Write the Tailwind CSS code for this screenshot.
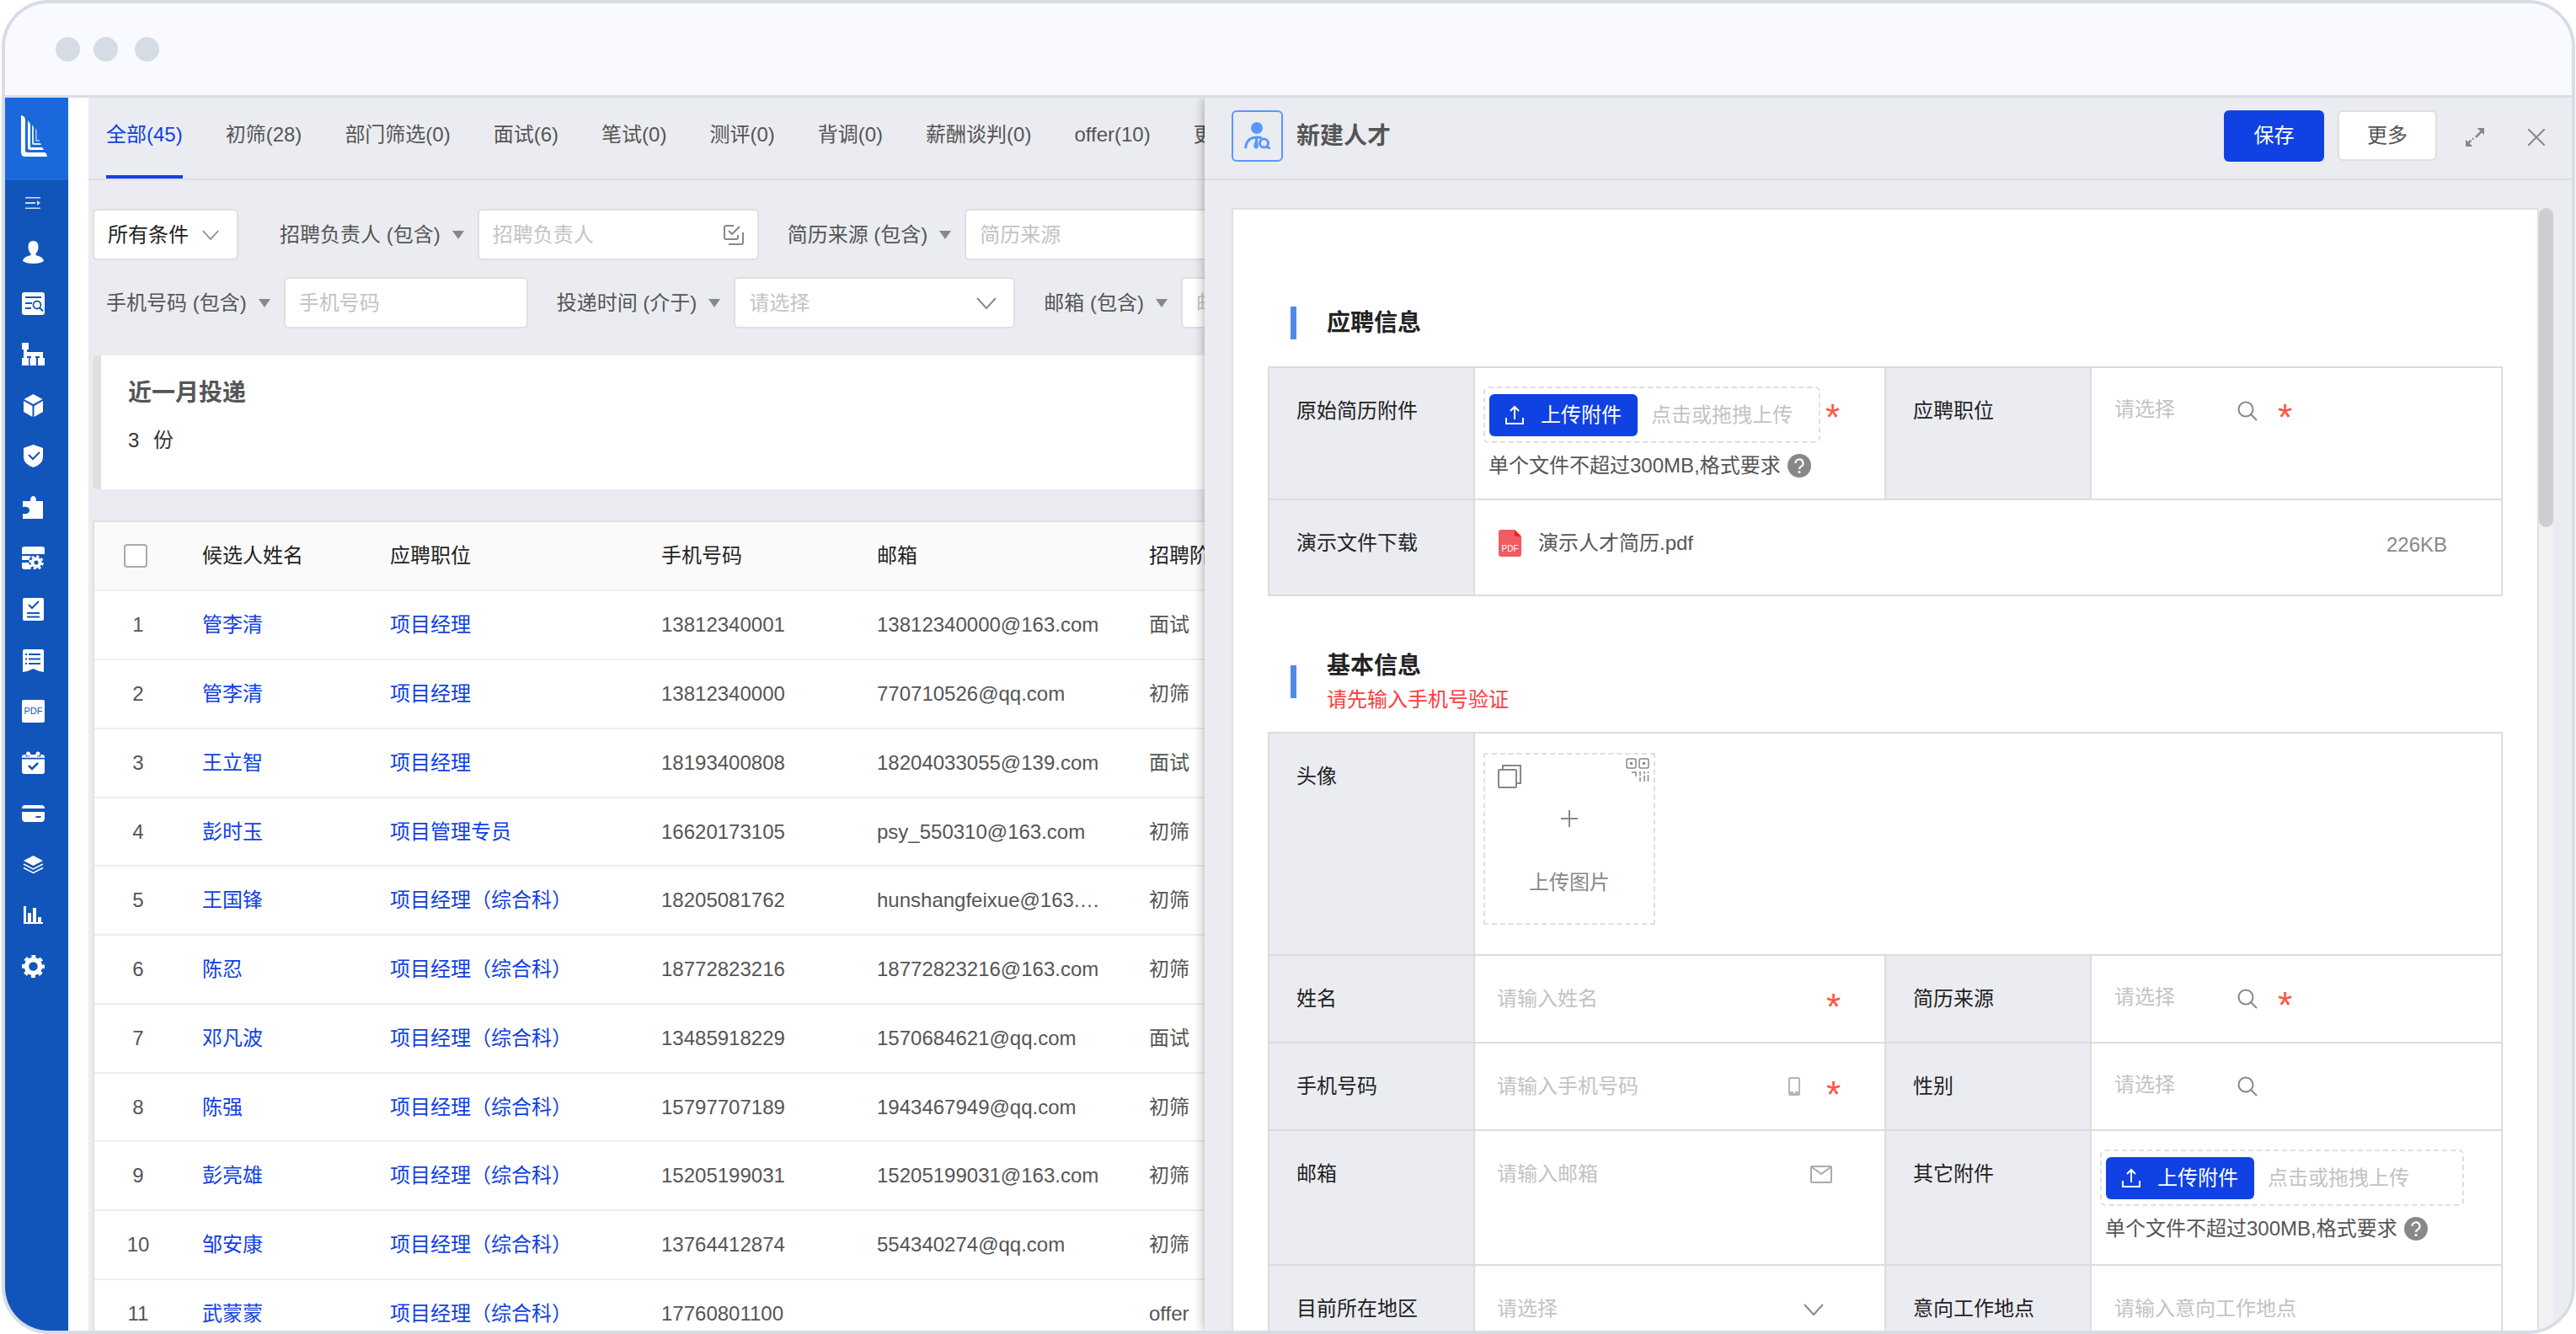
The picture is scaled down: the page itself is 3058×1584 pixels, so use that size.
<!DOCTYPE html>
<html lang="zh-CN">

<head>
    <meta charset="UTF-8">
    <meta name="viewport" content="width=device-width, initial-scale=1.0">
    <script src="https://cdn.jsdelivr.net/npm/@tailwindcss/browser@4"></script>
    <title>新建人才</title>
</head>

<body class="h-screen overflow-hidden bg-white pl-[2px] pr-px font-['Liberation_Sans','Noto_Sans_CJK_SC',sans-serif] text-[24px] leading-6 text-[#555]">
    <!-- Shared icons -->
    <svg class="hidden">
        <symbol id="caret" viewBox="0 0 14 10"><path d="M0 0h14l-7 10z" fill="#888" /></symbol>
        <symbol id="chevron" viewBox="0 0 24 14"><path d="M1 1l11 12L23 1" fill="none" stroke="#888" stroke-width="2" /></symbol>
        <symbol id="search" viewBox="0 0 24 24"><g fill="none" stroke="#888" stroke-width="2"><circle cx="10" cy="10" r="8.500" /><path d="M16 16l7 7" /></g></symbol>
        <symbol id="upload" viewBox="0 0 22 24"><path d="M11 17V2M6 7l5-5 5 5M1 15v7h20v-7" fill="none" stroke="#fff" stroke-width="2" /></symbol>
        <symbol id="help" viewBox="0 0 28 28"><circle cx="14" cy="14" r="14" fill="#888" /><path d="M9.500 11a4.500 4.500 0 1 1 6.500 4q-2 1-2 3" fill="none" stroke="#fff" stroke-width="2.200" /><circle cx="14" cy="21.500" r="1.500" fill="#fff" /></symbol>
    </svg>

    <div class="flex h-full flex-col overflow-hidden rounded-[56px] border-4 border-[#d7dce5] bg-white">
        <!-- Window bar -->
        <div class="flex h-[112px] shrink-0 items-center border-b-[3px] border-[#d7dce5] bg-[#f8faff] pl-[60px]">
            <span class="mr-4 size-[29px] rounded-full bg-[#d5dce6]"></span>
            <span class="mr-5 size-[29px] rounded-full bg-[#d5dce6]"></span>
            <span class="size-[29px] rounded-full bg-[#d5dce6]"></span>
        </div>

        <div class="grid min-h-0 flex-1 grid-cols-[75px_24px_1325fr_1623fr] grid-rows-[minmax(0,1fr)] overflow-hidden">
            <!-- Sidebar -->
            <aside class="bg-[#1155bb]">
                <a href="#" aria-label="首页" class="flex h-[98px] items-center bg-[#1b68dd] pb-2 pl-[19px]">
                    <svg class="h-[49px] w-[31px]" viewBox="0 0 31 49" fill="#fff">
                        <path d="M0 0q3 0 5 4v38q0 2 2 2h21q2 0 3 5H5q-5 0-5-5z" />
                        <path d="M8 6l3 4v27q0 1 1 1h13l2 3H11q-3 0-3-3z" />
                        <path d="M13 11l2 3v18q0 1 1 1h7l1 2h-9q-2 0-2-2z" opacity=".85" />
                        <path d="M17 15l2 3v11h3v2h-5z" opacity=".5" />
                    </svg>
                </a>
                <button aria-label="收起菜单" class="mt-5 flex h-[14px] w-full justify-center pr-[9px]">
                    <svg class="h-[14px] w-[18px]" viewBox="0 0 18 14" fill="#fff"><path d="M0 0h18v1.500H0zM0 6h12v2H0zM0 12.500h18V14H0zM14 4l4 3-4 3z" opacity=".8" /></svg>
                </button>
                <nav class="mt-[38px] flex h-[875px] flex-col items-center justify-between pr-[9px] [&_svg]:size-[27px] [&_svg]:fill-white">
                    <a href="#" aria-label="人员"><svg viewBox="0 0 27 27"><path d="M13.500 0q6 0 6 7 0 5-3 8v2q9 2 9.500 7-4 3-12.500 3T1 24q.5-5 9.500-7v-2q-3-3-3-8 0-7 6-7z" /></svg></a>
                    <a href="#" aria-label="简历搜索"><svg viewBox="0 0 27 27"><rect width="27" height="27" rx="3" /><g fill="none" stroke="#1155bb" stroke-width="1.800"><path d="M4 6h19M4 13h8M4 19h7" /><circle cx="18" cy="15" r="4.500" /><path d="M21 18.500l4 4" /></g></svg></a>
                    <a href="#" aria-label="组织"><svg viewBox="0 0 27 27"><path d="M0 0h8v8H6v3h19v7h2v9h-8v-9h2v-2h-5v2h1v9H9.500v-9H11v-2H6v2h2v9H0v-9h2V8H0z" /></svg></a>
                    <a href="#" aria-label="产品"><svg viewBox="0 0 27 27"><path d="M13.500 0l11 6-11 6-11-6zM2 8l10.500 6v13L2 21zM25 8l-10.500 6v13L25 21z" /></svg></a>
                    <a href="#" aria-label="安全"><svg viewBox="0 0 27 27"><path d="M13.500 0L25 4v11q0 8-11.500 12Q2 23 2 15V4z" /><path d="M8 12l5 5 8-8" fill="none" stroke="#1155bb" stroke-width="2" /></svg></a>
                    <a href="#" aria-label="插件"><svg viewBox="0 0 27 27"><path d="M1 6h9q0-6 3.500-6T17 6h8v21H1v-6q8 1 8-4t-8-4z" /></svg></a>
                    <a href="#" aria-label="表单设置"><svg viewBox="0 0 27 27"><path d="M3 0h21q3 0 3 3v6H0V3q0-3 3-3zM0 11h11l-3 5H0zM0 19h8l3 8H3q-3 0-3-3z" /><circle cx="17" cy="19" r="4.500" fill="none" stroke="#fff" stroke-width="4" /><circle cx="17" cy="19" r="7.500" fill="none" stroke="#fff" stroke-width="2.500" stroke-dasharray="3.200 2.690" /></svg></a>
                    <a href="#" aria-label="任务"><svg viewBox="0 0 27 27"><rect x="1" width="25" height="27" rx="2" /><path d="M8 8l4 4 8-8M6 18h15M6 22.500h15" fill="none" stroke="#1155bb" stroke-width="2" /></svg></a>
                    <a href="#" aria-label="列表"><svg viewBox="0 0 27 27"><path d="M3 0h21q2 0 2 2v25q-7-1-12.500-4Q8 26 1 27V2q0-2 2-2z" /><path d="M8 6h14M8 11.500h14M8 17h14M4 6h2M4 11.500h2M4 17h2" stroke="#1155bb" stroke-width="2" /></svg></a>
                    <a href="#" aria-label="PDF"><svg viewBox="0 0 27 27"><rect width="27" height="27" rx="2" /><text x="13.500" y="17" text-anchor="middle" font-size="11" fill="#1155bb">PDF</text></svg></a>
                    <a href="#" aria-label="日程"><svg viewBox="0 0 27 27"><path d="M0 7q0-3 3-3h2l-1 3zM9 3l2 1h5l2-1v4H9zM24 4q3 0 3 3h-4l-1-3zM0 9.500h27V24q0 3-3 3H3q-3 0-3-3z" /><circle cx="7.500" cy="3" r="2.500" /><circle cx="19" cy="3" r="2.500" /><path d="M0 7h27" stroke="#fff" stroke-width="1.500" /><path d="M8 17l4 4 7-7" fill="none" stroke="#1155bb" stroke-width="2.500" /></svg></a>
                    <a href="#" aria-label="卡片"><svg viewBox="0 0 27 27"><path d="M4 4h19q4 0 4 4H0q0-4 4-4zM0 12h27v7q0 5-4 5H4q-4 0-4-5z" /><path d="M16 19q0-2 2-2h5q0 2-2 2z" fill="#1155bb" /></svg></a>
                    <a href="#" aria-label="图层"><svg viewBox="0 0 27 27"><path d="M13.500 3L25 9l-11.500 6L2 9z" /><path d="M2 13l11.500 6L25 13M2 17.500l11.500 6L25 17.500" fill="none" stroke="#fff" stroke-width="1.500" /></svg></a>
                    <a href="#" aria-label="统计"><svg viewBox="0 0 27 27"><path d="M2 3h3v19h2v-11h4v11h2V5h4v17h2v-6h4v6h2v2H2z" /></svg></a>
                    <a href="#" aria-label="设置"><svg viewBox="0 0 27 27"><circle cx="13.500" cy="13.500" r="8" fill="none" stroke="#fff" stroke-width="5.500" /><circle cx="13.500" cy="13.500" r="12" fill="none" stroke="#fff" stroke-width="3" stroke-dasharray="5 4.425" stroke-dashoffset="2.500" /></svg></a>
                </nav>
            </aside>
            <div></div>

            <!-- Candidate list -->
            <main class="overflow-hidden bg-[#ebecf1] pl-[5px]">
                <nav class="-ml-[5px] flex h-[98px] gap-[51px] border-b-2 border-[#dfdfdf] pl-[21px] whitespace-nowrap [&_a]:h-[96px] [&_a]:pt-8">
                    <a href="#" class="border-b-4 border-[#1041e3] text-[#1041e3]">全部(45)</a>
                    <a href="#">初筛(28)</a>
                    <a href="#">部门筛选(0)</a>
                    <a href="#">面试(6)</a>
                    <a href="#">笔试(0)</a>
                    <a href="#">测评(0)</a>
                    <a href="#">背调(0)</a>
                    <a href="#">薪酬谈判(0)</a>
                    <a href="#">offer(10)</a>
                    <a href="#">更多</a>
                </nav>

                <!-- Filters -->
                <form class="mt-[34px] flex flex-col gap-5 whitespace-nowrap [&_input]:w-full [&_input]:min-w-0 [&_input]:outline-none [&_input]:placeholder:text-[#c3c3c3] [&_label]:mr-4 [&_label]:flex [&_label]:shrink-0 [&_label]:items-center [&_label]:gap-[14px]">
                    <div class="flex items-center">
                        <div class="grid h-[61px] w-[173px] shrink-0 items-center rounded-md border-2 border-[#dfdfdf] bg-white *:col-start-1 *:row-start-1">
                            <select aria-label="条件" class="h-full w-full appearance-none pl-4 text-[#222]"><option>所有条件</option></select>
                            <svg class="pointer-events-none mr-[21px] h-3 w-5 justify-self-end"><use href="#chevron" /></svg>
                        </div>
                        <label for="owner" class="ml-[49px]">招聘负责人 (包含) <svg class="h-[10px] w-[14px]"><use href="#caret" /></svg></label>
                        <div class="flex h-[61px] w-[334px] shrink-0 items-center rounded-md border-2 border-[#dfdfdf] bg-white px-4">
                            <input id="owner" type="text" placeholder="招聘负责人">
                            <svg class="size-6 shrink-0" viewBox="0 0 24 24" fill="none" stroke="#888" stroke-width="2"><path d="M12 1H3q-2 0-2 2v12q0 2 2 2h12q2 0 2-2v-3M6 7l4 4 9-9M6 23h15q2 0 2-2V9" /></svg>
                        </div>
                        <label for="source" class="ml-[34px]">简历来源 (包含) <svg class="h-[10px] w-[14px]"><use href="#caret" /></svg></label>
                        <div class="flex h-[61px] w-[334px] shrink-0 items-center rounded-md border-2 border-[#dfdfdf] bg-white px-4">
                            <input id="source" type="text" placeholder="简历来源">
                        </div>
                    </div>
                    <div class="flex items-center pl-4">
                        <label for="phone">手机号码 (包含) <svg class="h-[10px] w-[14px]"><use href="#caret" /></svg></label>
                        <div class="flex h-[61px] w-[290px] shrink-0 items-center rounded-md border-2 border-[#dfdfdf] bg-white px-4">
                            <input id="phone" type="text" placeholder="手机号码">
                        </div>
                        <label for="time" class="ml-[34px]">投递时间 (介于) <svg class="h-[10px] w-[14px]"><use href="#caret" /></svg></label>
                        <div class="grid h-[61px] w-[334px] shrink-0 items-center rounded-md border-2 border-[#dfdfdf] bg-white *:col-start-1 *:row-start-1">
                            <select id="time" class="h-full w-full appearance-none pl-4 text-[#c3c3c3]"><option>请选择</option></select>
                            <svg class="pointer-events-none mr-5 h-[14px] w-6 justify-self-end"><use href="#chevron" /></svg>
                        </div>
                        <label for="mail" class="ml-[34px]">邮箱 (包含) <svg class="h-[10px] w-[14px]"><use href="#caret" /></svg></label>
                        <div class="flex h-[61px] w-[334px] shrink-0 items-center rounded-md border-2 border-[#dfdfdf] bg-white px-4">
                            <input id="mail" type="text" placeholder="邮箱">
                        </div>
                    </div>
                </form>

                <!-- Statistic -->
                <section class="mt-8 h-[159px] rounded-l-md border-l-[10px] border-[#dfdfdf] bg-white pt-[29px] pl-8">
                    <h2 class="text-[28px] leading-8 font-bold">近一月投递</h2>
                    <p class="mt-7 text-[#333]">3 <span class="ml-[10px]">份</span></p>
                </section>

                <!-- Candidates -->
                <table class="mt-[37px] w-[1580px] table-fixed border-separate border-spacing-0 border-t-2 border-l-2 border-[#dfdfdf] bg-white text-left [&_a]:text-[#1041e3] [&_td]:truncate [&_td]:border-b-2 [&_td]:border-[#eee] [&_td]:px-6 [&_td:first-child]:text-center [&_th]:border-b-2 [&_th]:border-[#eee] [&_th]:px-6 [&_th]:font-normal [&_th]:text-[#222] [&_tr]:h-[82px] [&_tbody_tr:nth-child(4n)]:h-[81px]">
                    <colgroup>
                        <col class="w-[104px]">
                        <col class="w-[223px]">
                        <col class="w-[322px]">
                        <col class="w-[256px]">
                        <col class="w-[323px]">
                        <col>
                    </colgroup>
                    <thead class="bg-[#fafafa]">
                        <tr>
                            <th><input type="checkbox" aria-label="全选" class="ml-[11px] block size-7 appearance-none rounded-[4px] border-2 border-[#aaa] bg-white"></th>
                            <th>候选人姓名</th>
                            <th>应聘职位</th>
                            <th>手机号码</th>
                            <th>邮箱</th>
                            <th>招聘阶段</th>
                        </tr>
                    </thead>
                    <tbody>
                        <tr><td>1</td><td><a href="#">管李清</a></td><td><a href="#">项目经理</a></td><td>13812340001</td><td>13812340000@163.com</td><td>面试</td></tr>
                        <tr><td>2</td><td><a href="#">管李清</a></td><td><a href="#">项目经理</a></td><td>13812340000</td><td>770710526@qq.com</td><td>初筛</td></tr>
                        <tr><td>3</td><td><a href="#">王立智</a></td><td><a href="#">项目经理</a></td><td>18193400808</td><td>18204033055@139.com</td><td>面试</td></tr>
                        <tr><td>4</td><td><a href="#">彭时玉</a></td><td><a href="#">项目管理专员</a></td><td>16620173105</td><td>psy_550310@163.com</td><td>初筛</td></tr>
                        <tr><td>5</td><td><a href="#">王国锋</a></td><td><a href="#">项目经理（综合科）</a></td><td>18205081762</td><td>hunshangfeixue@163.com</td><td>初筛</td></tr>
                        <tr><td>6</td><td><a href="#">陈忍</a></td><td><a href="#">项目经理（综合科）</a></td><td>18772823216</td><td>18772823216@163.com</td><td>初筛</td></tr>
                        <tr><td>7</td><td><a href="#">邓凡波</a></td><td><a href="#">项目经理（综合科）</a></td><td>13485918229</td><td>1570684621@qq.com</td><td>面试</td></tr>
                        <tr><td>8</td><td><a href="#">陈强</a></td><td><a href="#">项目经理（综合科）</a></td><td>15797707189</td><td>1943467949@qq.com</td><td>初筛</td></tr>
                        <tr><td>9</td><td><a href="#">彭亮雄</a></td><td><a href="#">项目经理（综合科）</a></td><td>15205199031</td><td>15205199031@163.com</td><td>初筛</td></tr>
                        <tr><td>10</td><td><a href="#">邹安康</a></td><td><a href="#">项目经理（综合科）</a></td><td>13764412874</td><td>554340274@qq.com</td><td>初筛</td></tr>
                        <tr><td>11</td><td><a href="#">武蒙蒙</a></td><td><a href="#">项目经理（综合科）</a></td><td>17760801100</td><td></td><td>offer</td></tr>
                    </tbody>
                </table>
            </main>

            <!-- New talent drawer -->
            <section class="z-10 flex flex-col overflow-hidden bg-[#ebecf1] shadow-[-1px_0_12px_rgba(0,0,0,0.3)]">
                <header class="flex h-[98px] shrink-0 items-center border-b-2 border-[#dfdfdf] pr-8 pb-[6px] pl-8">
                    <div class="flex size-[61px] items-center justify-center rounded-md border-2 border-[#5a96ff]">
                        <svg class="size-8" viewBox="0 0 32 32" fill="none" stroke="#5a96ff" stroke-width="3"><circle cx="15" cy="7" r="7" fill="#5a96ff" stroke="none" /><path d="M1.500 31Q3 18 15 18q4 0 6 1" /><path d="M13 18h4l-1 4 1 8-3 2-3-3 2-7z" fill="#5a96ff" stroke="none" /><circle cx="23.500" cy="25" r="5" /><path d="M27 28.500l3.500 3.500" /></svg>
                    </div>
                    <h1 class="ml-4 flex-1 pt-[2px] text-[28px] font-bold">新建人才</h1>
                    <button class="h-[61px] w-[119px] rounded-md bg-[#1041e3] text-white">保存</button>
                    <button class="ml-4 h-[60px] w-[118px] rounded-md border-2 border-[#dfdfdf] bg-white">更多</button>
                    <button aria-label="全屏" class="mt-1 ml-[34px]"><svg class="size-[22px]" viewBox="0 0 24 24" fill="#888"><path d="M24 0v9l-3-3-7 7-2-2 7-7-4-4zM0 24v-9l3 3 3-3 2 2-3 3 4 4zM8 14l1.500-1.500L11 14l-1.500 1.500z" /></svg></button>
                    <button aria-label="关闭" class="mt-1 ml-[52px]"><svg class="size-5" viewBox="0 0 20 20" fill="none" stroke="#888" stroke-width="2"><path d="M0 0l20 20M20 0L0 20" /></svg></button>
                </header>

                <div class="flex min-h-0 flex-1 pt-[33px] pr-[22px] pl-8">
                    <form class="flex-1 overflow-hidden border-2 border-b-0 border-[#dfdfdf] bg-white px-[41px] pt-[115px] [&_input]:min-w-0 [&_input]:outline-none [&_input]:placeholder:text-[#c3c3c3]">
                        <!-- Application info -->
                        <div class="mb-8 flex h-[39px] items-center gap-9 pl-[27px]">
                            <span class="h-[39px] w-[7px] bg-[#5089e6]"></span>
                            <h2 class="text-[28px] font-bold text-[#222]">应聘信息</h2>
                        </div>
                        <div class="grid grid-cols-[1fr_2fr_1fr_2fr] border-t-2 border-l-2 border-[#dcdcdc] *:border-r-2 *:border-b-2 *:border-[#dcdcdc] [&>label]:bg-[#ebecf1] [&>label]:pt-[39px] [&>label]:pl-8 [&>label]:text-[#222]">
                            <label for="resume">原始简历附件</label>
                            <div class="h-[157px] pt-[22px] pl-[10px]">
                                <div class="flex">
                                    <div class="flex h-[67px] w-[400px] items-center rounded-md border-2 border-dashed border-[#dfdfdf] px-[5px]">
                                        <button type="button" id="resume" class="flex h-[50px] w-[176px] items-center justify-center gap-5 rounded-md bg-[#1041e3] text-white"><svg class="h-6 w-[22px]"><use href="#upload" /></svg>上传附件</button>
                                        <span class="ml-4 text-[#c3c3c3]">点击或拖拽上传</span>
                                    </div>
                                    <span class="mt-[15px] ml-[6px] h-6 text-[44px] leading-none text-[#ff5442]">*</span>
                                </div>
                                <p class="mt-[13px] flex items-center pl-[6px]">单个文件不超过300MB,格式要求<svg class="ml-2 size-7"><use href="#help" /></svg></p>
                            </div>
                            <label for="job">应聘职位</label>
                            <div class="flex pt-[37px] pl-[27px]">
                                <input id="job" type="text" placeholder="请选择" class="h-6 w-[146px]">
                                <svg class="mt-[2px] size-6"><use href="#search" /></svg>
                                <span class="ml-6 h-6 text-[44px] leading-none text-[#ff5442]">*</span>
                            </div>
                            <label for="demo">演示文件下载</label>
                            <div class="col-span-3 flex h-[114px] pt-[39px] pl-7">
                                <svg class="-mt-1 mr-5 h-8 w-[27px]" viewBox="0 0 27 32"><path d="M3 0h16l8 8v21q0 3-3 3H3q-3 0-3-3V3q0-3 3-3z" fill="#f15b62" /><path d="M19 0v6q0 2 2 2h6z" fill="#e8222c" /><text x="13.500" y="26" text-anchor="middle" font-size="10" fill="#fff">PDF</text></svg>
                                <a id="demo" href="#" class="flex-1">演示人才简历.pdf</a>
                                <span class="pt-[2px] pr-16 text-[#888]">226KB</span>
                            </div>
                        </div>

                        <!-- Basic info -->
                        <div class="mt-[59px] mb-[18px] flex items-center gap-9 pl-[27px]">
                            <span class="h-[39px] w-[7px] bg-[#5089e6]"></span>
                            <div class="pt-1 leading-10">
                                <h2 class="text-[28px] font-bold text-[#222]">基本信息</h2>
                                <p class="text-[#ff3b40]">请先输入手机号验证</p>
                            </div>
                        </div>
                        <div class="grid grid-cols-[1fr_2fr_1fr_2fr] border-t-2 border-l-2 border-[#dcdcdc] *:border-r-2 *:border-b-2 *:border-[#dcdcdc] [&>label]:bg-[#ebecf1] [&>label]:pt-[39px] [&>label]:pl-8 [&>label]:text-[#222]">
                            <label for="avatar">头像</label>
                            <div class="col-span-3 h-[264px] pt-[23px] pl-[10px]">
                                <button type="button" id="avatar" class="flex size-[204px] flex-col items-center border-2 border-dashed border-[#dfdfdf] text-[#888]">
                                    <span class="flex w-full justify-between pt-1 pr-[5px] pl-[15px]">
                                        <svg class="mt-2 size-7" viewBox="0 0 28 28" fill="none" stroke="#888" stroke-width="2"><rect x="1" y="6" width="21" height="21" rx="1" /><path d="M6 6V1h21v21h-5" /></svg>
                                        <svg class="size-7" viewBox="0 0 28 28" fill="none" stroke="#888" stroke-width="1.500"><rect x="1" y="1" width="11" height="11" rx="2" /><rect x="16" y="1" width="11" height="11" rx="2" /><path d="M5 6.500h3M20 6.500h3" stroke-width="3" /><path d="M7 17h5v5M17 16v5M17 23v5M22 16v3M22 21v7M26.500 16v2M26.500 20v8" /></svg>
                                    </span>
                                    <svg class="mt-[26px] size-5" viewBox="0 0 20 20" stroke="#888" stroke-width="2"><path d="M10 0v20M0 10h20" /></svg>
                                    <span class="mt-[54px]">上传图片</span>
                                </button>
                            </div>

                            <label for="name">姓名</label>
                            <div class="flex h-[104px] pt-[39px] pr-[52px] pl-[26px]">
                                <input id="name" type="text" placeholder="请输入姓名" class="h-6 flex-1">
                                <span class="h-6 text-[44px] leading-none text-[#ff5442]">*</span>
                            </div>
                            <label for="from">简历来源</label>
                            <div class="flex pt-[37px] pl-[27px]">
                                <input id="from" type="text" placeholder="请选择" class="h-6 w-[146px]">
                                <svg class="mt-[2px] size-6"><use href="#search" /></svg>
                                <span class="ml-6 h-6 text-[44px] leading-none text-[#ff5442]">*</span>
                            </div>

                            <label for="tel">手机号码</label>
                            <div class="flex h-[104px] pt-[39px] pr-[52px] pl-[26px]">
                                <input id="tel" type="text" placeholder="请输入手机号码" class="h-6 flex-1">
                                <svg class="mr-[31px] h-6 w-[14px]" viewBox="0 0 14 24"><rect x="1" y="2" width="12" height="20" rx="1" fill="none" stroke="#b5b5b5" stroke-width="2" /><path d="M1 18h5v2h2v-2h5v4H1z" fill="#b5b5b5" /></svg>
                                <span class="h-6 text-[44px] leading-none text-[#ff5442]">*</span>
                            </div>
                            <label for="gender">性别</label>
                            <div class="flex pt-[37px] pl-[27px]">
                                <input id="gender" type="text" placeholder="请选择" class="h-6 w-[146px]">
                                <svg class="mt-[2px] size-6"><use href="#search" /></svg>
                            </div>

                            <label for="email">邮箱</label>
                            <div class="flex h-[160px] pt-[39px] pr-[62px] pl-[26px]">
                                <input id="email" type="email" placeholder="请输入邮箱" class="h-6 flex-1">
                                <svg class="mt-[2px] h-[21px] w-[26px]" viewBox="0 0 26 21" fill="none" stroke="#aaa" stroke-width="2"><rect x="1" y="1" width="24" height="19" rx="1" /><path d="M2 2l11 8 11-8" /></svg>
                            </div>
                            <label for="other">其它附件</label>
                            <div class="pt-[22px] pl-[10px]">
                                <div class="flex h-[67px] w-[432px] items-center rounded-md border-2 border-dashed border-[#dfdfdf] px-[5px]">
                                    <button type="button" id="other" class="flex h-[50px] w-[176px] items-center justify-center gap-5 rounded-md bg-[#1041e3] text-white"><svg class="h-6 w-[22px]"><use href="#upload" /></svg>上传附件</button>
                                    <span class="ml-4 text-[#c3c3c3]">点击或拖拽上传</span>
                                </div>
                                <p class="mt-[13px] flex items-center pl-[6px]">单个文件不超过300MB,格式要求<svg class="ml-2 size-7"><use href="#help" /></svg></p>
                            </div>

                            <label for="area">目前所在地区</label>
                            <div class="grid h-[104px] items-start pt-[39px] pr-[72px] pl-[26px] *:col-start-1 *:row-start-1">
                                <select id="area" class="h-6 w-full appearance-none text-[#c3c3c3]"><option>请选择</option></select>
                                <svg class="pointer-events-none mt-[6px] h-[14px] w-6 justify-self-end"><use href="#chevron" /></svg>
                            </div>
                            <label for="place">意向工作地点</label>
                            <div class="flex pt-[39px] pl-[27px]">
                                <input id="place" type="text" placeholder="请输入意向工作地点" class="h-6 flex-1">
                            </div>
                        </div>
                    </form>
                    <!-- Scroll bar -->
                    <div class="w-[17px] rounded-t-full bg-[#f1f1f1]">
                        <div class="h-[379px] rounded-full bg-[#cdcecf]"></div>
                    </div>
                </div>
            </section>
        </div>
    </div>
</body>

</html>
